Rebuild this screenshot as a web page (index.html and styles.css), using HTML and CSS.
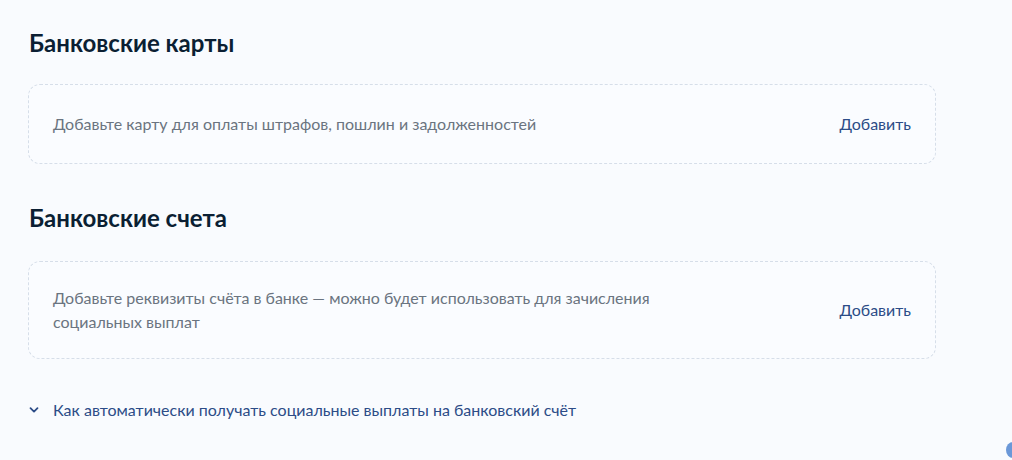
FILE: index.html
```html
<!DOCTYPE html>
<html lang="ru">
<head>
<meta charset="utf-8">
<title>Банковские карты и счета</title>
<link rel="stylesheet" href="styles.css">
</head>
<body>
<main class="page">
  <section class="block">
    <h2 class="title">Банковские карты</h2>
    <div class="card card-short">
      <p class="card-text">Добавьте карту для оплаты штрафов, пошлин и задолженностей</p>
      <a class="action" href="#">Добавить</a>
    </div>
  </section>
  <section class="block block-second">
    <h2 class="title">Банковские счета</h2>
    <div class="card">
      <p class="card-text">Добавьте реквизиты счёта в банке — можно будет использовать для зачисления социальных выплат</p>
      <a class="action" href="#">Добавить</a>
    </div>
  </section>
  <a class="toggle" href="#">
    <svg class="chevron" width="12" height="12" viewBox="0 0 12 12" aria-hidden="true"><path d="M2.5 4.2 L6 7.6 L9.5 4.2" fill="none" stroke="currentColor" stroke-width="1.8" stroke-linecap="round" stroke-linejoin="round"/></svg>
    <span>Как автоматически получать социальные выплаты на банковский счёт</span>
  </a>
</main>
<div class="bot"></div>
</body>
</html>
```
FILE: styles.css
```css
html, body {
  margin: 0;
  padding: 0;
  background: #f9fbfe;
  height: 100%;
  overflow: hidden;
}
body {
  font-family: Lato, "Noto Sans", sans-serif;
  color: #0b1f33;
}
.page {
  width: 908px;
  margin-left: 28px;
  padding-top: 27px;
  display: flex;
  flex-direction: column;
}
.title {
  margin: 0 0 25px 1px;
  font-size: 24px;
  line-height: 32px;
  font-weight: 700;
  color: #0b1f33;
}
.block-second {
  margin-top: 38px;
}
.block-second .title {
  margin-bottom: 27px;
}
.card {
  box-sizing: border-box;
  min-height: 80px;
  padding: 24px 24px;
  border: 1px dashed #d6dee9;
  border-radius: 12px;
  background: #fafcff;
  display: flex;
  align-items: center;
  justify-content: space-between;
}
.card-text {
  margin: 0;
  max-width: 600px;
  font-size: 16px;
  line-height: 24px;
  color: #6a7480;
}
.action {
  font-size: 16px;
  line-height: 24px;
  color: #2c4c87;
  text-decoration: none;
}
.toggle {
  margin-top: 39px;
  display: flex;
  align-items: center;
  gap: 13px;
  font-size: 16px;
  line-height: 24px;
  color: #2c4c87;
  text-decoration: none;
}
.chevron {
  color: #2c4c87;
}
.bot {
  position: fixed;
  right: -8px;
  bottom: 2px;
  width: 14px;
  height: 16px;
  border-radius: 50%;
  background: #6b98d8;
}
```
